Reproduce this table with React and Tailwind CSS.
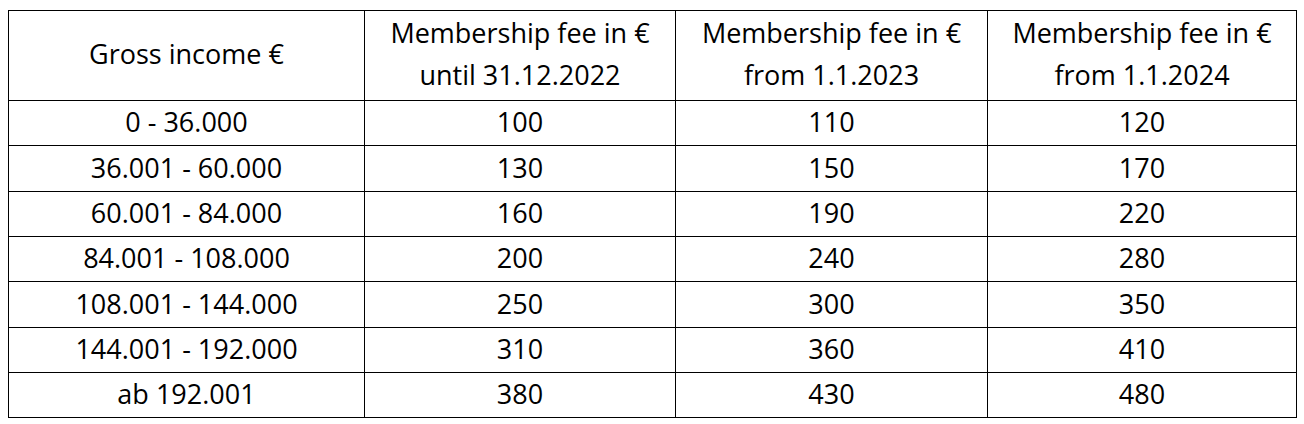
const headers = [
  ["Gross income €"],
  ["Membership fee in €", "until 31.12.2022"],
  ["Membership fee in €", "from 1.1.2023"],
  ["Membership fee in €", "from 1.1.2024"],
];

const rows = [
  ["0 - 36.000", "100", "110", "120"],
  ["36.001 - 60.000", "130", "150", "170"],
  ["60.001 - 84.000", "160", "190", "220"],
  ["84.001 - 108.000", "200", "240", "280"],
  ["108.001 - 144.000", "250", "300", "350"],
  ["144.001 - 192.000", "310", "360", "410"],
  ["ab 192.001", "380", "430", "480"],
];

export default function App() {
  return (
    <div className="w-[1304px] h-[424px] bg-white pl-[8px] pt-[10px] font-['Open_Sans',sans-serif] text-black">
      <div className="inline-grid grid-cols-[355px_310px_311px_308px] grid-rows-[89px_44px_45px_44px_44px_45px_44px_44px] gap-px p-px bg-black">
        {headers.map((lines, i) => (
          <div key={i} className="bg-white flex flex-col items-center justify-center pb-[4px] text-[27px] leading-[42px]">
            {lines.map((l) => (
              <span key={l}>{l}</span>
            ))}
          </div>
        ))}
        {rows.map((r, ri) =>
          r.map((c, ci) => (
            <div key={ri + "-" + ci} className="bg-white flex items-center justify-center pb-[3px] text-[27px] leading-none">
              {c}
            </div>
          ))
        )}
      </div>
    </div>
  );
}
